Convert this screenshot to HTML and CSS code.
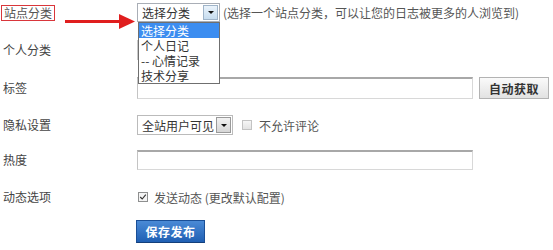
FILE: index.html
```html
<!DOCTYPE html>
<html lang="zh-CN">
<head>
<meta charset="utf-8">
<link rel="stylesheet" href="styles.css">
</head>
<body>
<div class="form">
  <div class="row r1">
    <div class="label"><span class="marked">站点分类</span></div>
    <div class="field">
      <div class="select sel1"><span class="sel-text">选择分类</span><span class="sel-btn blue"><i class="tri"></i></span></div>
      <span class="hint">(选择一个站点分类，可以让您的日志被更多的人浏览到)</span>
    </div>
  </div>
  <div class="row r2">
    <div class="label">个人分类</div>
    <div class="field">
      <div class="select sel2"></div>
    </div>
  </div>
  <div class="row r3">
    <div class="label">标签</div>
    <div class="field">
      <div class="input"></div>
      <span class="btn-grey">自动获取</span>
    </div>
  </div>
  <div class="row r4">
    <div class="label">隐私设置</div>
    <div class="field">
      <div class="select sel3"><span class="sel-text">全站用户可见</span><span class="sel-btn grey"><i class="tri"></i></span></div>
      <span class="cbox"></span>
      <span class="opt">不允许评论</span>
    </div>
  </div>
  <div class="row r5">
    <div class="label">热度</div>
    <div class="field">
      <div class="input"></div>
    </div>
  </div>
  <div class="row r6">
    <div class="label">动态选项</div>
    <div class="field">
      <span class="cbox checked"><svg viewBox="0 0 10 10" width="8" height="8"><path d="M1.5 5 L4 7.5 L8.5 2" fill="none" stroke="#333" stroke-width="1.4"/></svg></span>
      <span class="opt">发送动态 (更改默认配置)</span>
    </div>
  </div>
  <div class="row r7">
    <div class="label"></div>
    <div class="field">
      <span class="btn-blue">保存发布</span>
    </div>
  </div>

  <svg class="arrow" width="72" height="18" viewBox="0 0 72 18">
    <rect x="0" y="7" width="56" height="3" fill="#e01e1e"/>
    <polygon points="54,1 70,8.5 54,16" fill="#e01e1e"/>
  </svg>

  <ul class="dropdown">
    <li class="active">选择分类</li>
    <li>个人日记</li>
    <li>-- 心情记录</li>
    <li>技术分享</li>
  </ul>
</div>
</body>
</html>
```
FILE: styles.css
```css
* { box-sizing: border-box; }
html, body { margin: 0; padding: 0; background: #fff; }
body {
  font-family: "Noto Sans CJK SC", "Noto Sans", sans-serif;
  font-size: 12px;
  color: #444;
  width: 553px;
  height: 250px;
  overflow: hidden;
}
.form { position: relative; padding-top: 3px; }
.row { display: flex; align-items: center; }
.label { width: 137px; padding-left: 3px; color: #444; line-height: 14px; }
.field { display: flex; align-items: center; flex: 1; height: 100%; }
.r1 { height: 19px; }
.r2 { height: 20px; margin-top: 18px; }
.r3 { height: 22px; margin-top: 17px; }
.r4 { height: 20px; margin-top: 16px; }
.r5 { height: 20px; margin-top: 15px; }
.r6 { height: 20px; margin-top: 17px; }
.r7 { height: 23px; margin-top: 13px; }

.marked {
  display: inline-block;
  margin-left: -2px;
  padding: 0 2px;
  border: 1.5px solid #d9363b;
  line-height: 14px;
  color: #555;
}

.select {
  height: 100%;
  border: 1px solid #a9aeb6;
  background: #fff;
  display: flex;
  align-items: center;
  justify-content: space-between;
  padding: 0 1px 0 4px;
  color: #333;
}
.sel1 { width: 83px; }
.sel2 { width: 83px; border-color: #c9c9c9; }
.sel3 { width: 96px; border-color: #bbb; }
.sel-btn {
  width: 15px;
  height: calc(100% - 2px);
  display: flex;
  align-items: center;
  justify-content: center;
  border: 1px solid #9fb4c9;
}
.sel-btn.blue { background: linear-gradient(#eaf3fb, #c6dcef); }
.sel-btn.grey { background: linear-gradient(#f2f2f2, #d6d6d6); border-color: #9a9a9a; }
.tri {
  display: block;
  width: 0; height: 0;
  border-left: 3px solid transparent;
  border-right: 3px solid transparent;
  border-top: 3px solid #111;
}
.hint { margin-left: 3px; color: #555; white-space: nowrap; }

.input {
  width: 336px;
  height: 100%;
  border: 1px solid #d8d8d8;
  border-top: 2px solid #a8a8a8;
  border-left-color: #c4c4c4;
  background: #fff;
}
.btn-grey {
  margin-left: 6px;
  width: 70px;
  height: 22px;
  display: flex;
  align-items: center;
  justify-content: center;
  border: 1px solid #b3b3b3;
  background: linear-gradient(#fafafa, #e2e2e2);
  color: #333;
  font-weight: bold;
  letter-spacing: 0.5px;
}
.cbox {
  width: 10px; height: 10px;
  border: 1px solid #c3c3c3;
  background: linear-gradient(#f6f6f6, #e3e3e3);
  margin-left: 9px;
  display: flex; align-items: center; justify-content: center;
}
.cbox.checked { margin-left: 1px; border-color: #8e8f8f; background: #f4f4f4; }
.opt { margin-left: 7px; color: #555; }
.r6 .opt { margin-left: 6px; }

.btn-blue {
  margin-left: -1px;
  width: 69px;
  height: 23px;
  display: flex;
  align-items: center;
  justify-content: center;
  background: linear-gradient(#4a8ad6, #1f5fb3);
  border: 1px solid #1a4f97;
  border-bottom-color: #143f7a;
  color: #fff;
  font-weight: bold;
  letter-spacing: 0.5px;
}

.arrow { position: absolute; left: 65px; top: 13px; }

.dropdown {
  position: absolute;
  left: 138px;
  top: 22px;
  width: 82px;
  margin: 0;
  padding: 0;
  list-style: none;
  background: #fff;
  border: 1px solid #6f6f6f;
}
.dropdown li {
  height: 15px;
  line-height: 15px;
  padding-left: 2px;
  color: #333;
  white-space: nowrap;
}
.dropdown li.active { background: #3c8df0; color: #fff; }
```
